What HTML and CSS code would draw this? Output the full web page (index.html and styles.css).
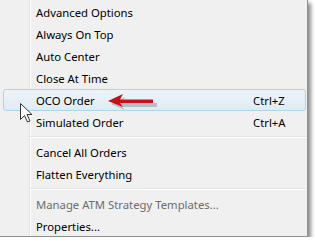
FILE: index.html
```html
<!DOCTYPE html>
<html lang="en">
<head>
  <meta charset="UTF-8">
  <title>Context Menu</title>
  <link rel="stylesheet" href="styles.css">
</head>
<body>
  <div class="menu">
    <div class="item">Advanced Options</div>
    <div class="item">Always On Top</div>
    <div class="item">Auto Center</div>
    <div class="item">Close At Time</div>
    <div class="item hover">OCO Order<span class="key">Ctrl+Z</span></div>
    <div class="item">Simulated Order<span class="key">Ctrl+A</span></div>
    <div class="sep"></div>
    <div class="item">Cancel All Orders</div>
    <div class="item">Flatten Everything</div>
    <div class="sep"></div>
    <div class="item disabled">Manage ATM Strategy Templates...</div>
    <div class="item">Properties...</div>

    <svg class="arrow" width="54" height="20" viewBox="0 0 54 20">
      <path d="M5 12 L19 5 L16 11 L51 11 L51 15 L16 15 L19 18 Z" fill="#555" opacity="0.3"/>
      <path d="M2 9 L17 2 L14 7.5 L47 7.5 L47 11 L14 11 L17 15 Z" fill="#c8101a"/>
    </svg>

    <svg class="cursor" width="13" height="20" viewBox="0 0 13 20">
      <path d="M0.5 0.5 L0.5 16.5 L4.5 12.5 L7.5 19 L10 18 L7 11.5 L12 11.5 Z" fill="#fff" stroke="#333" stroke-width="1" stroke-linejoin="miter"/>
    </svg>
  </div>
</body>
</html>
```

FILE: styles.css
```css
body {margin: 0; background: #fff; font-family: "Noto Sans", "Open Sans", sans-serif; font-size: 11.3px; color: #000;}
.menu {position: relative; width: 308px; height: 237px; padding: 1px 0 0 3px; background: #f0f0f0 linear-gradient(to right, transparent 29px, #e2e3e3 29px, #e2e3e3 30px, #fff 30px, #fff 31px, transparent 31px); border-right: 1px solid #8e8e8e; border-bottom: 1px solid #8e8e8e; box-shadow: 3px 3px 4px rgba(0,0,0,0.45); box-sizing: border-box;}
.item {display: flex; align-items: center; height: 22px; width: 303px; padding-left: 32px; box-sizing: border-box; border: 1px solid transparent; border-radius: 3px; white-space: nowrap;}
.item .key {margin-left: auto; width: 52px;}
.hover {border-color: #a8d8eb; background: linear-gradient(#edf5fa, #dfebf3);}
.disabled {color: #6d6d6d;}
.sep {height: 8px; margin-left: 27px; width: 276px; background: linear-gradient(transparent 3px, #e2e3e3 3px, #e2e3e3 4px, #fff 4px, #fff 5px, transparent 5px);}
.arrow {position: absolute; left: 106px; top: 92px;}
.cursor {position: absolute; left: 20px; top: 103px;}
```
